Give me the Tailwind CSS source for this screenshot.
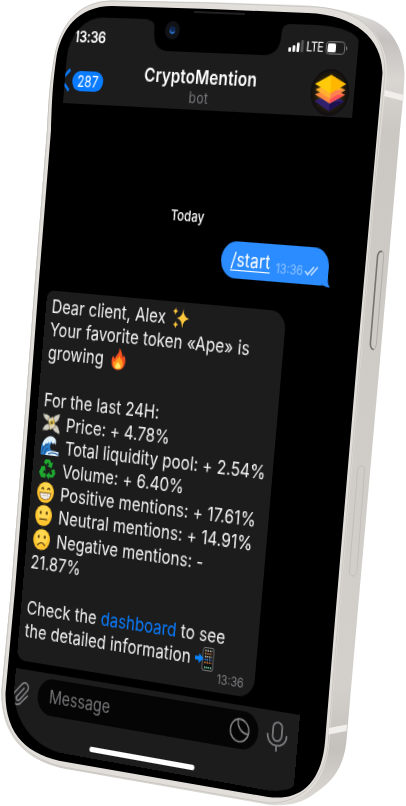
<!DOCTYPE html>
<html lang="en">
<head>
<meta charset="utf-8">
<title>CryptoMention bot</title>
<script src="https://cdn.jsdelivr.net/npm/@tailwindcss/browser@4"></script>
</head>
<body class="bg-white overflow-hidden">
<main class="relative w-[406px] h-[806px] overflow-hidden font-['Inter','Noto_Sans',sans-serif]">

  <!-- Phone body -->
  <svg class="absolute inset-0" width="406" height="806" viewBox="0 0 406 806" fill="none">
    <defs>
      <linearGradient id="side" x1="0" y1="0" x2="0" y2="806" gradientUnits="userSpaceOnUse">
        <stop offset="0" stop-color="#e9e8e5"/><stop offset=".05" stop-color="#c4c1be"/><stop offset=".1" stop-color="#d9d6d2"/><stop offset=".16" stop-color="#cbc8c3"/><stop offset=".85" stop-color="#d3d0cb"/><stop offset=".93" stop-color="#c4c1bc"/><stop offset="1" stop-color="#dedbd6"/>
      </linearGradient>
    </defs>
    <path fill="url(#side)" d="M47 130C49 96 50 82 54 60C59 28 76 1 112 .5L210 2L300 5C325 6 350 11 370 19C394 28 404 52 404.500 74C404 94 402 110 400 130L380 360L357 620L347 735C345 765 335 780 314 794C302 803 290 806 270 805L66 769C25 761 0 735 1.500 690L11 590L26 400L35 280Z"/>
    <path fill="#e2dfdb" d="M47 130C49 96 50 82 54 60C59 28 76 1 112 .5L210 4L318 8C364 11 387 36 387 73L375 190L361 360L339 620L329 745C326 779 306 806 270 804L66 768C25 760 0 735 1.500 690L11 590L26 400L35 280Z"/>
    <path stroke="#c3c0bb" stroke-width=".8" d="M47.500 130C49 96 50 82 54 60C59 28 76 1 112 1L210 3L316 7C362 10 385 34 385 73L374 190L360 360L338 620L328 745C325 777 304 804 268 803L66 767.500C25 759 1 733 2 690L11.500 590L26.500 400L35.500 280Z"/>
    <path fill="#000" d="M51 130C52 96 53 82 56 60C60 30 78 6 112 6L210 9L308 13C355 15 382 38 382.500 73L372 190L357 360L335 620L325 742C322 776 306 802 268 797L66 762C28 756 5 735 5.500 693L15 590L30 400L39 280Z"/>
    <path fill="#f1efeb" d="M385 90L404 95L403.500 101L384 96ZM329 728L347 724.500L346.500 731L328.500 734.500Z"/>
    <path stroke="#77746f" stroke-width="1.600" stroke-linecap="round" d="M382 251.500C379.500 251 378 253 377.500 257L370.500 342C370 347 371 349 373.500 349.500"/>
    <path stroke="#b0ada8" stroke-width="1" d="M382 251.500C384 252 384 255 383.500 258L376.500 343C376 347 375 349 373.500 349.500"/>
    <path stroke="#c2bfba" stroke-width="1" d="M361.500 466Q365 466 364.500 471L357 570Q356.500 576 353 576Q349 576 349.500 570L357.500 471Q358 466 361.500 466Z"/>
    <path stroke="#202021" stroke-width="2.200" stroke-linecap="round" d="M195 12L244 14"/>
  </svg>

  <!-- Screen, seen at an angle -->
  <section class="absolute left-0 top-0 w-[331px] h-[695px] flex flex-col overflow-hidden bg-black text-white origin-top-left rounded-tl-[40px] rounded-tr-[50px_14px] rounded-bl-[66px_54px] rounded-br-[34px_10px] [transform:matrix3d(0.815465,0.025993,0,-0.00016377,-0.086809,1.055798,0,0.000014223,0,0,1,0,70.118,16.425,0,0.998834)]">

    <header class="relative h-[82px] shrink-0 bg-[#1c1c1d]">
      <svg class="absolute left-[93px] top-0" width="160" height="29" viewBox="0 0 160 29">
        <path fill="#000" d="M0 0H160Q153 1 153 8V10Q153 29 134 29H26Q8 29 8 10V8Q8 1 0 1Z"/>
        <circle cx="29" cy="9.500" r="8.500" fill="#111317"/>
        <circle cx="29" cy="9.500" r="3.700" fill="#10264e"/>
        <path d="M26.500 9.500a2.600 2.600 0 0 0 5 1" stroke="#2c6fc0" stroke-width="1.500" fill="none"/>
      </svg>
      <div class="flex items-center justify-between h-[38px] pl-[7px] pr-[11px]">
        <span class="text-[15px] font-semibold tracking-[-0.4px]">13:36</span>
        <div class="flex items-center gap-[3px] pt-[1px]">
          <svg width="17" height="11" viewBox="0 0 17 11"><g fill="#fff"><rect y="7" width="3" height="4" rx="1"/><rect x="4.500" y="5" width="3" height="6" rx="1"/><rect x="9" y="2.500" width="3" height="8.500" rx="1"/><rect x="13.500" width="3" height="11" rx="1" opacity=".25"/></g></svg>
          <span class="text-[12px] leading-none font-normal tracking-[-0.7px]">LTE</span>
          <svg width="24" height="12" viewBox="0 0 24 12"><rect x=".5" y=".5" width="20" height="11" rx="3" fill="none" stroke="#77777a"/><rect x="2" y="2" width="9" height="8" rx="1.500" fill="#fff"/><path d="M22 4v4q1.500-.6 1.500-2T22 4" fill="#77777a"/></svg>
        </div>
      </div>
      <div class="relative flex h-[44px] items-center justify-between pr-[5px]">
        <div class="flex items-center">
          <svg width="8" height="22" viewBox="0 0 8 22"><path d="M5.500 1L-4 11L5.500 21" fill="none" stroke="#0a7cff" stroke-width="2.600"/></svg>
          <span class="ml-[1px] h-[19px] w-[37px] rounded-full bg-[#0a7cff] text-center text-[14px] leading-[19px] tracking-[0px]">287</span>
        </div>
        <div class="flex w-[150px] flex-col items-center pb-[1px] mr-[12px]">
          <h1 class="text-[17.5px] leading-[22px] font-semibold tracking-[0.15px]">CryptoMention</h1>
          <span class="text-[14px] leading-[15px] tracking-[0.3px] text-[#77777a]">bot</span>
        </div>
        <svg width="43" height="42" viewBox="0 0 44 44">
          <defs><radialGradient id="glow"><stop offset=".3" stop-color="#735500"/><stop offset=".75" stop-color="#211a0c"/><stop offset="1" stop-color="#0d0c10"/></radialGradient></defs>
          <circle cx="22" cy="22" r="22" fill="url(#glow)"/>
          <g transform="translate(1.500 2) scale(.93 .9)">
          <path fill="#30206e" d="M4 32L22 24L41 31L23 42Z"/><path fill="#1c1250" d="M23 32L41 31L23 42Z"/>
          <path fill="#ff8a3d" d="M4 25L22 18L41 24L23 34Z"/><path fill="#ff4f57" d="M23 24L41 24L23 34Z"/>
          <path fill="#ffb02e" d="M4 20L22 13L41 19L23 29Z"/><path fill="#ff8050" d="M23 20L41 19L23 29Z"/>
          <path fill="#ffca0a" d="M3 14L22 4L41 13L23 23Z"/><path fill="#ffb800" d="M22 4L41 13L23 23Z"/>
          </g>
        </svg>
      </div>
    </header>

    <div class="flex h-[540px] shrink-0 flex-col pt-[88px]">
      <p class="w-[315px] text-center text-[13px] leading-[20px] font-medium tracking-[0.1px]">Today</p>

      <div class="relative mt-[10px] ml-[200px] flex h-[34px] w-[120px] items-center rounded-[17px] rounded-br-[8px] bg-[#2b8cff] pl-[11px]">
        <span class="text-[17.5px] leading-[22px] underline decoration-1 underline-offset-3 tracking-[0.15px]">/start</span>
        <span class="ml-[6px] mt-[10px] text-[12px] leading-none text-[#8fc3ff]">13:36</span>
        <svg class="ml-[2px] mt-[9px]" width="15" height="9" viewBox="0 0 15 9" fill="none" stroke="#d5e9ff" stroke-width="1.300"><path d="M.5 5L3.500 8L10 .7M7 7.500L7.500 8L14 .7"/></svg>
        <svg class="absolute -right-[3px] bottom-[-1px]" width="16" height="14" viewBox="0 0 16 14"><path fill="#2b8cff" d="M13 0C13 8 13 11 16 14C10 14 7 12 4 9Z"/></svg>
      </div>

      <article class="mt-[26px] h-[354px] w-[278px] rounded-[17px] rounded-tl-[8px] rounded-bl-[10px] bg-[#1c1c1d] pl-[7px] pt-[4px] text-[17.5px] leading-[22.15px] text-[#f1f1f1] tracking-[0.05px] whitespace-nowrap">
        <p>Dear client, Alex
          <svg class="inline align-[-4px] ml-[1px]" width="21" height="21" viewBox="0 0 20 20" fill="#ffc83d"><path d="M12.500 2Q13 9.500 19.500 10.500Q13 11.500 12.500 19Q12 11.500 6 10.500Q12 9.500 12.500 2Z"/><path d="M4 1Q4.300 4 7 4.500Q4.300 5 4 8Q3.700 5 1 4.500Q3.700 4 4 1ZM5 13Q5.300 15.700 8 16.200Q5.300 16.700 5 19.500Q4.700 16.700 2.500 16.200Q4.700 15.700 5 13Z"/></svg></p>
        <p>Your favorite token «Ape» is</p>
        <p>growing
          <svg class="inline align-[-4px] ml-[2px]" width="21" height="21" viewBox="0 0 20 20"><path fill="#f4511e" d="M10 0C14 3 13 6 15 8C16 7 15.500 5.500 15.500 5C20 11 18 19.500 10 19.500C2 19.500 1 12 4 7C4.500 9 5 9.500 6 9.500C7 6 11 5 10 0Z"/><path fill="#ff9d1f" d="M11 6C11 10 14 9 15 13C16 17 13 19 10 19C6 19 3.500 16 5 12C6 13 7 12.500 7.500 11C8 9 11 9 11 6Z"/><path fill="#ffe566" d="M10 12C10 14 13 14 13 17C12.500 19 7.500 19 7 17C6.500 15 9.500 14 10 12Z"/></svg></p>
        <p>&nbsp;</p>
        <p>For the last 24H:</p>
        <p><svg class="inline align-[-4px] mr-[2px]" width="22" height="21" viewBox="0 0 20 20"><g fill="#d2cfc5" stroke="#77746b" stroke-width=".6"><path d="M8 9C5 8 1 7 0 2C3 3 6 1 9 6ZM12 7C12 3 15 2 19 1C19 5 18 8 14 9ZM7 11C4 11 1 13 1 17C4 16 7 18 9 14ZM12 13C13 18 16 17 20 19C20 15 18 11 14 11Z"/></g><path fill="#dcd4b8" stroke="#8b8158" stroke-width=".7" d="M6 6L12 4L15 13L9 16Z"/><path fill="#e0b52e" d="M7.500 8.500L12.500 6.500L13.500 10L9 12Z"/><circle cx="10.500" cy="9.500" r="1.300" fill="#6a6541"/></svg>
          Price: + 4.78%</p>
        <p><svg class="inline align-[-4px] mr-[2px]" width="23" height="21" viewBox="0 0 21 20"><path fill="#2d7dc8" d="M1 18C-1 9 3 2 11 2C15 2 17 4 17 7C14 5 11 7 11 10C11 14 15 15 21 14V18Z"/><path fill="#dff2fb" d="M2 9C3 3 8 0 13 1C17 2 18 5 17 8L15 6L14 8L12 5L10 8L9 6L7 9L6 7L4 11ZM8 15Q14 13 21 14.500V18H6Z"/><path d="M2 16C3 11 5 9 8 8M5 17C5 14 7 12 9 12M9 17Q15 14 21 17" stroke="#164f93" stroke-width="1.100" fill="none"/></svg>
          Total liquidity pool: + 2.54%</p>
        <p><svg class="inline align-[-4px] mr-[2px]" width="22" height="21" viewBox="0 0 20 20" fill="#1fa82f"><path d="M7 1H12L14 4L16 3L14.500 8.500L9.500 7L11.500 6L10 3.500L8.500 6L5 4Z"/><path d="M18 9L19.500 13L17 17H12.500V19L9 15.500L12.500 12V14H15.500L16 13L14 10.500Z"/><path d="M2 8L7 7L8 12L6.300 11L5 13.500H8.500V17.500H3.500L.5 13L2.500 9Z"/></svg>
          Volume: + 6.40%</p>
        <p><svg class="inline align-[-4px] mr-[2px]" width="22" height="21" viewBox="0 0 20 20"><circle cx="10" cy="10" r="9.600" fill="#ffc52e"/><circle cx="10" cy="8" r="7" fill="#ffd84f"/><path d="M5 7.500Q6.500 4.500 8 7.500M12 7.500Q13.500 4.500 15 7.500" stroke="#59390c" stroke-width="1.300" fill="none"/><path fill="#fff" stroke="#80551a" stroke-width=".8" d="M3.500 10.500H16.500Q16 16.500 10 16.500Q4 16.500 3.500 10.500Z"/><path d="M4 13H16M7.500 11V16M10 11V16M12.500 11V16" stroke="#b3a58e" stroke-width=".5"/></svg>
          Positive mentions: + 17.61%</p>
        <p><svg class="inline align-[-4px] mr-[2px]" width="22" height="21" viewBox="0 0 20 20"><circle cx="10" cy="10" r="9.600" fill="#ffc52e"/><circle cx="10" cy="8" r="7" fill="#ffd84f"/><ellipse cx="6.500" cy="7.500" rx="1.200" ry="1.600" fill="#59390c"/><ellipse cx="13.500" cy="7.500" rx="1.200" ry="1.600" fill="#59390c"/><path d="M5.500 13.500H14.500" stroke="#59390c" stroke-width="1.200"/></svg>
          Neutral mentions: + 14.91%</p>
        <p><svg class="inline align-[-4px] mr-[2px]" width="22" height="21" viewBox="0 0 20 20"><circle cx="10" cy="10" r="9.600" fill="#ffc52e"/><circle cx="10" cy="8" r="7" fill="#ffd84f"/><ellipse cx="6.500" cy="7.500" rx="1.200" ry="1.600" fill="#59390c"/><ellipse cx="13.500" cy="7.500" rx="1.200" ry="1.600" fill="#59390c"/><path d="M5.500 15.500Q10 10.500 14.500 15.500" stroke="#59390c" stroke-width="1.200" fill="none"/></svg>
          Negative mentions: -</p>
        <p>21.87%</p>
        <p>&nbsp;</p>
        <p>Check the <a class="text-[#0a7cff]">dashboard</a> to see</p>
        <p>the detailed information
          <svg class="inline align-[-5px]" width="22" height="22" viewBox="0 0 20 20"><rect x="8" y=".5" width="11" height="19" rx="2" fill="#111" stroke="#77777a" stroke-width=".8"/><path stroke-width="1.300" stroke-dasharray="1.300 1" d="M10 3H17.500M10 8H17.500" stroke="#d9d5c5"/><path stroke-width="1.300" stroke-dasharray="1.300 1" d="M10 5.500H17.500M10 13H17.500" stroke="#e28a45"/><path stroke-width="1.300" stroke-dasharray="1.300 1" d="M10 10.500H17.500" stroke="#4f95e8"/><path stroke-width="1.500" stroke-dasharray="1.300 .8" d="M10 17H17.500" stroke="#75dfae"/><path fill="#0a84ff" d="M0 8.500H4V6L9 10L4 14V11.500H0Z"/></svg></p>
        <p class="-mt-[1px] pr-[12px] text-right text-[12px] leading-[14px] tracking-normal text-[#818184]">13:36</p>
      </article>
    </div>

    <footer class="flex h-[73px] shrink-0 flex-col bg-[#1c1c1d]">
      <div class="flex items-center pt-[5px] text-[#838386]">
        <svg class="-ml-[2px]" width="21" height="26" viewBox="0 0 21 26" fill="none" stroke="currentColor" stroke-width="1.700" stroke-linecap="round"><path d="M14 8L6 16.500C4 19 7 22 9.500 19.500L18 10C21 6 16 0 11.500 4L3 13C-3 20 5 28 11 22.500L18.500 15"/></svg>
        <div class="ml-[10px] flex h-[35px] w-[258px] items-center justify-between rounded-full bg-[#050505] pl-[14px] pr-[9px]">
          <span class="text-[17px] tracking-[0px] text-[#77777a]">Message</span>
          <svg width="24" height="24" viewBox="0 0 24 24" fill="none" stroke="currentColor" stroke-width="1.600"><path d="M9.500 1.800A10.500 10.500 0 1 0 22.300 14.500C15 15 9 10 9.500 1.800ZM9.500 1.800C16 .5 23.500 6 22.300 14.500"/></svg>
        </div>
        <svg class="ml-[9px]" width="24" height="28" viewBox="0 0 24 28" fill="none" stroke="currentColor" stroke-width="1.700" stroke-linecap="round"><rect x="7" y="1" width="10" height="17" rx="5"/><path d="M1.500 12.500C1.500 25.500 22.500 25.500 22.500 12.500M12 22.500V27"/></svg>
      </div>
      <div class="mt-[22px] ml-[96px] h-[5px] w-[123px] shrink-0 rounded-full bg-white"></div>
    </footer>
  </section>
</main>
</body>
</html>
